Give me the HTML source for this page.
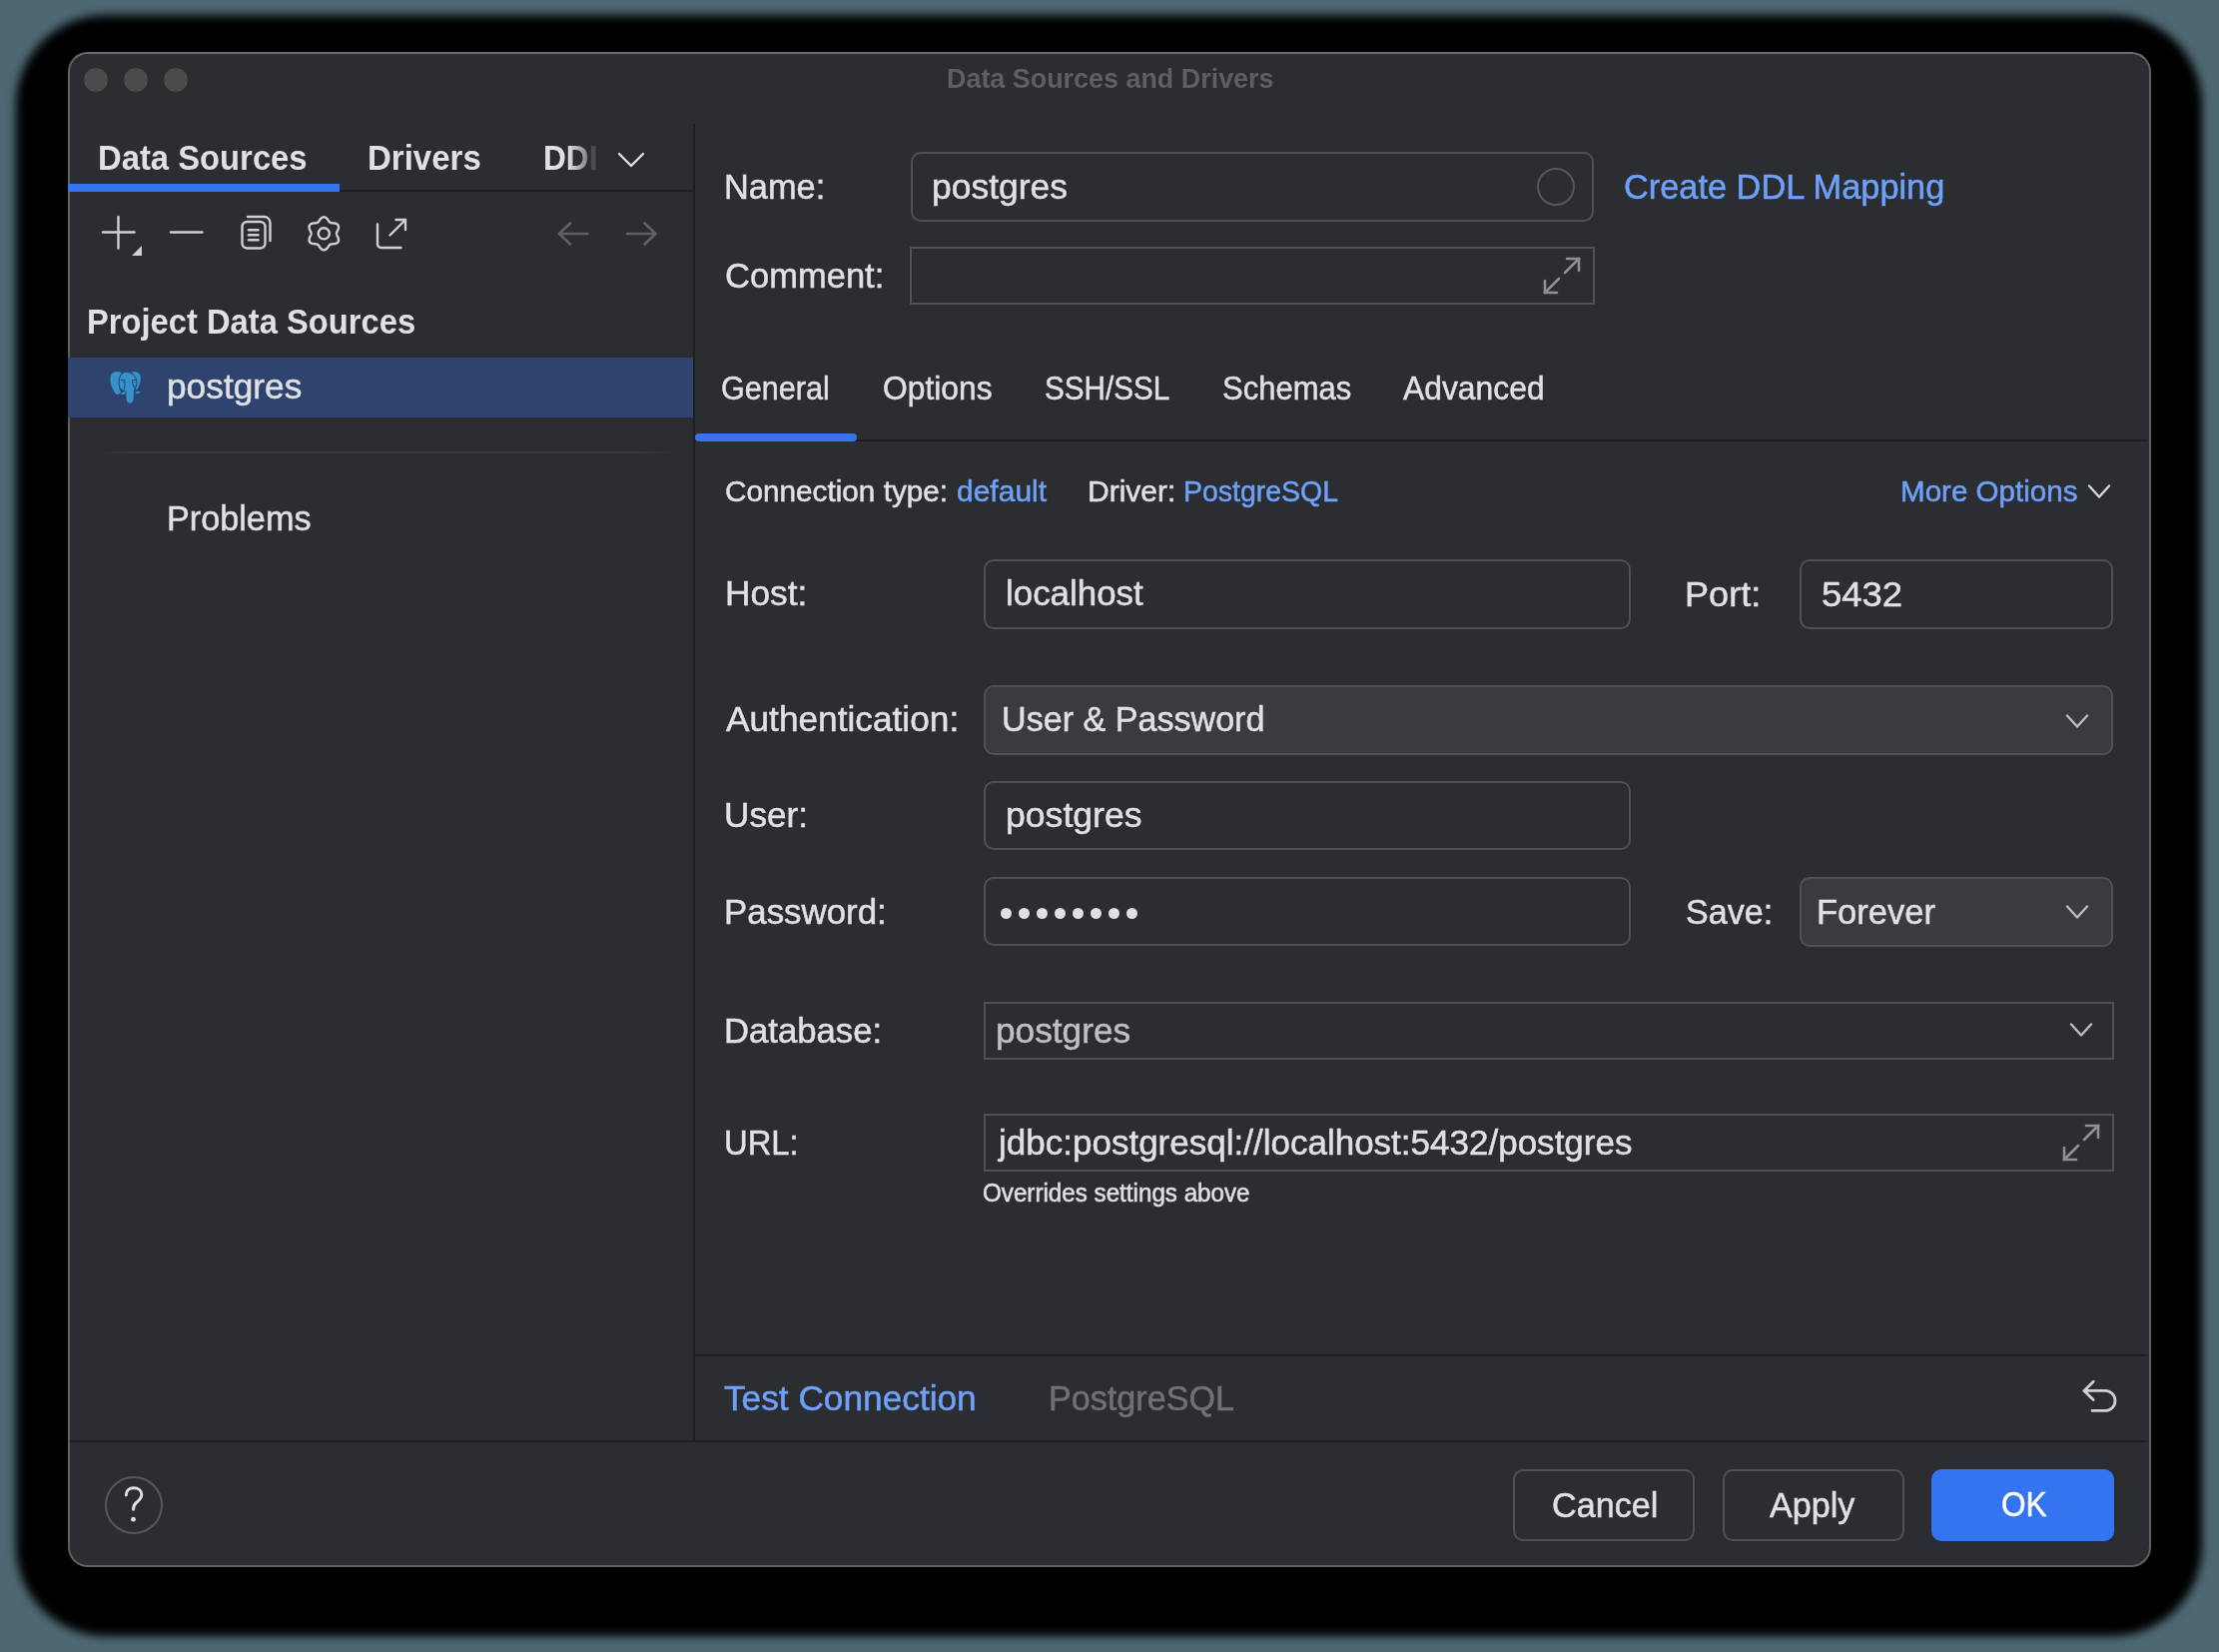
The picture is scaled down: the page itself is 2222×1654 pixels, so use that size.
<!DOCTYPE html>
<html><head><meta charset="utf-8"><style>
html,body{margin:0;padding:0;}
body{width:2222px;height:1654px;background:#4e6873;position:relative;overflow:hidden;font-family:"Liberation Sans",sans-serif;}
.a{position:absolute;}
.t{position:absolute;white-space:nowrap;transform-origin:0 0;}
#tddl{-webkit-mask-image:linear-gradient(90deg,#000 45%,rgba(0,0,0,.55) 78%,rgba(0,0,0,.18) 86%,rgba(0,0,0,.18) 100%)}
svg{position:absolute;left:0;top:0;}
</style></head><body>
<div class="a" style="left:16px;top:15px;width:2189px;height:1623px;background:#000;border-radius:90px;filter:blur(5px)"></div>
<div class="a" style="left:68px;top:52px;width:2086px;height:1517px;background:#2b2d30;border-radius:20px;box-sizing:border-box;border:2px solid #5f6064;border-top-color:#6a6b6e"></div>
<div class="a" style="left:84px;top:68px;width:24px;height:24px;background:#4a4b4d;border-radius:50%"></div>
<div class="a" style="left:124px;top:68px;width:24px;height:24px;background:#4a4b4d;border-radius:50%"></div>
<div class="a" style="left:164px;top:68px;width:24px;height:24px;background:#4a4b4d;border-radius:50%"></div>
<div class="a" style="left:70px;top:190px;width:625px;height:2px;background:#1e1f22"></div>
<div class="a" style="left:68px;top:184px;width:272px;height:8px;background:#3574f0"></div>
<div class="a" style="left:694px;top:124px;width:2px;height:1319px;background:#1e1f22"></div>
<div class="a" style="left:68px;top:358px;width:626px;height:60px;background:#2e436e"></div>
<div class="a" style="left:94px;top:452px;width:584px;height:2px;background:linear-gradient(90deg,rgba(57,59,64,0),#393b40 8%,#393b40 92%,rgba(57,59,64,0))"></div>
<div class="a" style="left:70px;top:1442px;width:2081px;height:2px;background:#1e1f22"></div>
<div class="a" style="left:696px;top:1356px;width:1455px;height:2px;background:#1e1f22"></div>
<div class="a" style="left:696px;top:440px;width:1455px;height:2px;background:#1e1f22"></div>
<div class="a" style="left:696px;top:434px;width:162px;height:8px;background:#3574f0;border-radius:4px"></div>
<div class="a" style="left:912px;top:152px;width:684px;height:70px;background:#2b2d30;border:2px solid #4e5157;border-radius:10px;box-sizing:border-box"></div>
<div class="a" style="left:911px;top:247px;width:686px;height:58px;background:#2b2d30;border:2px solid #4e5157;border-radius:0px;box-sizing:border-box"></div>
<div class="a" style="left:985px;top:560px;width:648px;height:70px;background:#2b2d30;border:2px solid #4e5157;border-radius:10px;box-sizing:border-box"></div>
<div class="a" style="left:1802px;top:560px;width:314px;height:70px;background:#2b2d30;border:2px solid #4e5157;border-radius:10px;box-sizing:border-box"></div>
<div class="a" style="left:985px;top:686px;width:1131px;height:70px;background:#393b40;border:2px solid #4e5157;border-radius:10px;box-sizing:border-box"></div>
<div class="a" style="left:985px;top:782px;width:648px;height:69px;background:#2b2d30;border:2px solid #4e5157;border-radius:10px;box-sizing:border-box"></div>
<div class="a" style="left:985px;top:878px;width:648px;height:69px;background:#2b2d30;border:2px solid #4e5157;border-radius:10px;box-sizing:border-box"></div>
<div class="a" style="left:1802px;top:878px;width:314px;height:70px;background:#393b40;border:2px solid #4e5157;border-radius:10px;box-sizing:border-box"></div>
<div class="a" style="left:985px;top:1003px;width:1132px;height:58px;background:#2b2d30;border:2px solid #4e5157;border-radius:0px;box-sizing:border-box"></div>
<div class="a" style="left:985px;top:1115px;width:1132px;height:58px;background:#2b2d30;border:2px solid #4e5157;border-radius:0px;box-sizing:border-box"></div>
<div class="a" style="left:1515px;top:1471px;width:182px;height:72px;background:#2b2d30;border:2px solid #4e5157;border-radius:10px;box-sizing:border-box"></div>
<div class="a" style="left:1725px;top:1471px;width:182px;height:72px;background:#2b2d30;border:2px solid #4e5157;border-radius:10px;box-sizing:border-box"></div>
<div class="a" style="left:1934px;top:1471px;width:183px;height:72px;background:#3574f0;border-radius:10px"></div>
<div class="a" style="left:105px;top:1478px;width:58px;height:58px;border:2px solid #55575c;border-radius:50%;box-sizing:border-box"></div>
<div class="a" style="left:1539px;top:168px;width:38px;height:38px;border:2px solid #55575c;border-radius:50%;box-sizing:border-box"></div>
<div id="title" class="t" style="left:947.84px;top:65.90px;font-size:27px;line-height:27px;font-weight:700;color:#5e5f63;transform:scaleX(0.9965)">Data Sources and Drivers</div>
<div id="tds" class="t" style="left:98.16px;top:139.80px;font-size:35px;line-height:35px;font-weight:700;color:#dfe1e5;transform:scaleX(0.9369)">Data Sources</div>
<div id="tdr" class="t" style="left:368.40px;top:139.80px;font-size:35px;line-height:35px;font-weight:700;color:#dfe1e5;transform:scaleX(0.9428)">Drivers</div>
<div id="tddl" class="t" style="left:544.20px;top:139.80px;font-size:35px;line-height:35px;font-weight:700;color:#dfe1e5;transform:scaleX(0.9038)">DDI</div>
<div id="pds" class="t" style="left:86.72px;top:304.20px;font-size:35px;line-height:35px;font-weight:700;color:#dfe1e5;transform:scaleX(0.9347)">Project Data Sources</div>
<div id="rowpg" class="t" style="left:167.40px;top:369.00px;font-size:35px;line-height:35px;font-weight:400;color:#dfe1e5;transform:scaleX(1.0079);-webkit-text-stroke:0.5px #dfe1e5">postgres</div>
<div id="prob" class="t" style="left:166.94px;top:500.50px;font-size:35px;line-height:35px;font-weight:400;color:#dfe1e5;transform:scaleX(0.9774);-webkit-text-stroke:0.5px #dfe1e5">Problems</div>
<div id="name" class="t" style="left:725.40px;top:168.50px;font-size:35px;line-height:35px;font-weight:400;color:#dfe1e5;transform:scaleX(0.9823);-webkit-text-stroke:0.5px #dfe1e5">Name:</div>
<div id="namev" class="t" style="left:933.40px;top:168.50px;font-size:35px;line-height:35px;font-weight:400;color:#dfe1e5;transform:scaleX(1.0138);-webkit-text-stroke:0.5px #dfe1e5">postgres</div>
<div id="comm" class="t" style="left:726.20px;top:258.00px;font-size:35px;line-height:35px;font-weight:400;color:#dfe1e5;transform:scaleX(0.9868);-webkit-text-stroke:0.5px #dfe1e5">Comment:</div>
<div id="ddl" class="t" style="left:1625.64px;top:168.50px;font-size:35px;line-height:35px;font-weight:400;color:#6ea1fa;transform:scaleX(0.9812);-webkit-text-stroke:0.5px #6ea1fa">Create DDL Mapping</div>
<div id="tgen" class="t" style="left:722.08px;top:372.00px;font-size:33px;line-height:33px;font-weight:400;color:#dfe1e5;transform:scaleX(0.9269);-webkit-text-stroke:0.5px #dfe1e5">General</div>
<div id="topt" class="t" style="left:883.98px;top:372.00px;font-size:33px;line-height:33px;font-weight:400;color:#dfe1e5;transform:scaleX(0.9635);-webkit-text-stroke:0.5px #dfe1e5">Options</div>
<div id="tssh" class="t" style="left:1045.52px;top:372.00px;font-size:33px;line-height:33px;font-weight:400;color:#dfe1e5;transform:scaleX(0.8993);-webkit-text-stroke:0.5px #dfe1e5">SSH/SSL</div>
<div id="tsch" class="t" style="left:1223.66px;top:372.00px;font-size:33px;line-height:33px;font-weight:400;color:#dfe1e5;transform:scaleX(0.9396);-webkit-text-stroke:0.5px #dfe1e5">Schemas</div>
<div id="tadv" class="t" style="left:1405.12px;top:372.00px;font-size:33px;line-height:33px;font-weight:400;color:#dfe1e5;transform:scaleX(0.9648);-webkit-text-stroke:0.5px #dfe1e5">Advanced</div>
<div id="ctype" class="t" style="left:726.20px;top:478.00px;font-size:29px;line-height:29px;font-weight:400;color:#dfe1e5;transform:scaleX(1.0251);-webkit-text-stroke:0.5px #dfe1e5">Connection type:</div>
<div id="cdef" class="t" style="left:957.52px;top:478.00px;font-size:29px;line-height:29px;font-weight:400;color:#6ea1fa;transform:scaleX(1.0346);-webkit-text-stroke:0.5px #6ea1fa">default</div>
<div id="drv" class="t" style="left:1088.84px;top:478.00px;font-size:29px;line-height:29px;font-weight:400;color:#dfe1e5;transform:scaleX(1.0352);-webkit-text-stroke:0.5px #dfe1e5">Driver:</div>
<div id="drvv" class="t" style="left:1184.84px;top:478.00px;font-size:29px;line-height:29px;font-weight:400;color:#6ea1fa;transform:scaleX(0.9813);-webkit-text-stroke:0.5px #6ea1fa">PostgreSQL</div>
<div id="more" class="t" style="left:1902.84px;top:478.20px;font-size:29px;line-height:29px;font-weight:400;color:#6ea1fa;transform:scaleX(1.0198);-webkit-text-stroke:0.5px #6ea1fa">More Options</div>
<div id="host" class="t" style="left:726.06px;top:576.00px;font-size:35px;line-height:35px;font-weight:400;color:#dfe1e5;transform:scaleX(1.0069);-webkit-text-stroke:0.5px #dfe1e5">Host:</div>
<div id="hostv" class="t" style="left:1007.40px;top:576.00px;font-size:35px;line-height:35px;font-weight:400;color:#dfe1e5;transform:scaleX(0.9972);-webkit-text-stroke:0.5px #dfe1e5">localhost</div>
<div id="port" class="t" style="left:1686.72px;top:576.50px;font-size:35px;line-height:35px;font-weight:400;color:#dfe1e5;transform:scaleX(1.0316);-webkit-text-stroke:0.5px #dfe1e5">Port:</div>
<div id="portv" class="t" style="left:1824.20px;top:576.50px;font-size:35px;line-height:35px;font-weight:400;color:#dfe1e5;transform:scaleX(1.0422);-webkit-text-stroke:0.5px #dfe1e5">5432</div>
<div id="auth" class="t" style="left:727.12px;top:702.20px;font-size:35px;line-height:35px;font-weight:400;color:#dfe1e5;transform:scaleX(1.0071);-webkit-text-stroke:0.5px #dfe1e5">Authentication:</div>
<div id="authv" class="t" style="left:1003.40px;top:702.20px;font-size:35px;line-height:35px;font-weight:400;color:#dfe1e5;transform:scaleX(0.9743);-webkit-text-stroke:0.5px #dfe1e5">User &amp; Password</div>
<div id="user" class="t" style="left:724.72px;top:798.20px;font-size:35px;line-height:35px;font-weight:400;color:#dfe1e5;transform:scaleX(1.0040);-webkit-text-stroke:0.5px #dfe1e5">User:</div>
<div id="userv" class="t" style="left:1007.40px;top:798.20px;font-size:35px;line-height:35px;font-weight:400;color:#dfe1e5;transform:scaleX(1.0168);-webkit-text-stroke:0.5px #dfe1e5">postgres</div>
<div id="pass" class="t" style="left:724.72px;top:894.80px;font-size:35px;line-height:35px;font-weight:400;color:#dfe1e5;transform:scaleX(0.9959);-webkit-text-stroke:0.5px #dfe1e5">Password:</div>
<div id="save" class="t" style="left:1687.98px;top:895.00px;font-size:35px;line-height:35px;font-weight:400;color:#dfe1e5;transform:scaleX(0.9736);-webkit-text-stroke:0.5px #dfe1e5">Save:</div>
<div id="savev" class="t" style="left:1818.84px;top:895.00px;font-size:35px;line-height:35px;font-weight:400;color:#dfe1e5;transform:scaleX(0.9871);-webkit-text-stroke:0.5px #dfe1e5">Forever</div>
<div id="db" class="t" style="left:724.72px;top:1013.80px;font-size:35px;line-height:35px;font-weight:400;color:#dfe1e5;transform:scaleX(0.9912);-webkit-text-stroke:0.5px #dfe1e5">Database:</div>
<div id="dbv" class="t" style="left:996.72px;top:1013.80px;font-size:35px;line-height:35px;font-weight:400;color:#bec0c5;transform:scaleX(1.0065);-webkit-text-stroke:0.5px #bec0c5">postgres</div>
<div id="url" class="t" style="left:724.72px;top:1126.00px;font-size:35px;line-height:35px;font-weight:400;color:#dfe1e5;transform:scaleX(0.9361);-webkit-text-stroke:0.5px #dfe1e5">URL:</div>
<div id="urlv" class="t" style="left:1000.12px;top:1126.00px;font-size:35px;line-height:35px;font-weight:400;color:#dfe1e5;transform:scaleX(1.0003);-webkit-text-stroke:0.5px #dfe1e5">jdbc:postgresql://localhost:5432/postgres</div>
<div id="ovr" class="t" style="left:984.20px;top:1181.60px;font-size:25px;line-height:25px;font-weight:400;color:#dfe1e5;transform:scaleX(0.9676);-webkit-text-stroke:0.5px #dfe1e5">Overrides settings above</div>
<div id="test" class="t" style="left:725.18px;top:1382.30px;font-size:35px;line-height:35px;font-weight:400;color:#6ea1fa;transform:scaleX(1.0069);-webkit-text-stroke:0.5px #6ea1fa">Test Connection</div>
<div id="pgs" class="t" style="left:1050.28px;top:1382.30px;font-size:35px;line-height:35px;font-weight:400;color:#6f7175;transform:scaleX(0.9754);-webkit-text-stroke:0.5px #6f7175">PostgreSQL</div>
<div id="cancel" class="t" style="left:1553.86px;top:1488.50px;font-size:35px;line-height:35px;font-weight:400;color:#dfe1e5;transform:scaleX(0.9769);-webkit-text-stroke:0.5px #dfe1e5">Cancel</div>
<div id="apply" class="t" style="left:1772.44px;top:1488.50px;font-size:35px;line-height:35px;font-weight:400;color:#dfe1e5;transform:scaleX(0.9750);-webkit-text-stroke:0.5px #dfe1e5">Apply</div>
<div id="ok" class="t" style="left:2004.20px;top:1488.00px;font-size:35px;line-height:35px;font-weight:400;color:#ffffff;transform:scaleX(0.9031);-webkit-text-stroke:0.5px #ffffff">OK</div>
<div class="a" style="left:1001.50px;top:909px;width:11px;height:11px;border-radius:50%;background:#dfe1e5"></div>
<div class="a" style="left:1019.50px;top:909px;width:11px;height:11px;border-radius:50%;background:#dfe1e5"></div>
<div class="a" style="left:1037.50px;top:909px;width:11px;height:11px;border-radius:50%;background:#dfe1e5"></div>
<div class="a" style="left:1055.50px;top:909px;width:11px;height:11px;border-radius:50%;background:#dfe1e5"></div>
<div class="a" style="left:1073.50px;top:909px;width:11px;height:11px;border-radius:50%;background:#dfe1e5"></div>
<div class="a" style="left:1091.50px;top:909px;width:11px;height:11px;border-radius:50%;background:#dfe1e5"></div>
<div class="a" style="left:1109.50px;top:909px;width:11px;height:11px;border-radius:50%;background:#dfe1e5"></div>
<div class="a" style="left:1127.50px;top:909px;width:11px;height:11px;border-radius:50%;background:#dfe1e5"></div>
<svg width="2222" height="1654" viewBox="0 0 2222 1654"><polyline points="620.0,154.0 632,166.0 644.0,154.0" fill="none" stroke="#dfe1e5" stroke-width="2.4" stroke-linecap="round" stroke-linejoin="round"/><polyline points="2092.0,486.5 2102,497.5 2112.0,486.5" fill="none" stroke="#d5d7dc" stroke-width="2.4" stroke-linecap="round" stroke-linejoin="round"/><polyline points="2070.0,716.5 2080,727.5 2090.0,716.5" fill="none" stroke="#bcbec3" stroke-width="2.4" stroke-linecap="round" stroke-linejoin="round"/><polyline points="2070.0,907.5 2080,918.5 2090.0,907.5" fill="none" stroke="#bcbec3" stroke-width="2.4" stroke-linecap="round" stroke-linejoin="round"/><polyline points="2074.0,1025.5 2084,1036.5 2094.0,1025.5" fill="none" stroke="#bcbec3" stroke-width="2.4" stroke-linecap="round" stroke-linejoin="round"/><g fill="none" stroke="#8e9196" stroke-width="2.6" stroke-linecap="round"><polyline points="1569,259 1581,259 1581,271"/><line x1="1581" y1="259" x2="1567" y2="273"/><polyline points="1547,281 1547,293 1559,293"/><line x1="1547" y1="293" x2="1561" y2="279"/></g><g fill="none" stroke="#8e9196" stroke-width="2.6" stroke-linecap="round"><polyline points="2089,1127 2101,1127 2101,1139"/><line x1="2101" y1="1127" x2="2087" y2="1141"/><polyline points="2067,1149 2067,1161 2079,1161"/><line x1="2067" y1="1161" x2="2081" y2="1147"/></g><g fill="none" stroke="#ced0d6" stroke-width="2.4" stroke-linecap="round" stroke-linejoin="round"><line x1="103" y1="232.5" x2="134.5" y2="232.5"/><line x1="118.5" y1="217" x2="118.5" y2="248.5"/><line x1="171" y1="232.5" x2="202.5" y2="232.5"/><rect x="242.5" y="222" width="23" height="26.5" rx="5"/><path d="M248 217 h16.5 a6 6 0 0 1 6 6 v18"/><line x1="249" y1="230.3" x2="258.5" y2="230.3"/><line x1="249" y1="235.2" x2="258.5" y2="235.2"/><line x1="249" y1="240.2" x2="258.5" y2="240.2"/><path d="M378 224.5 v20 a3.5 3.5 0 0 0 3.5 3.5 h20"/><polyline points="396.5,220 406,220 406,230"/><line x1="406" y1="220" x2="390.5" y2="235.5"/></g><polygon points="142,246 142,256 132,256" fill="#ced0d6"/><polygon points="324.30,217.30 324.73,217.33 325.16,217.42 325.58,217.56 325.99,217.75 326.38,217.99 326.76,218.28 327.12,218.60 327.46,218.94 327.78,219.31 328.08,219.70 328.36,220.09 328.63,220.47 328.89,220.85 329.13,221.21 329.37,221.55 329.61,221.87 329.86,222.15 330.11,222.40 330.37,222.62 330.65,222.80 330.95,222.95 331.27,223.07 331.61,223.16 331.98,223.23 332.37,223.28 332.79,223.32 333.22,223.35 333.68,223.39 334.15,223.43 334.62,223.48 335.11,223.55 335.59,223.64 336.06,223.76 336.51,223.91 336.95,224.09 337.36,224.31 337.73,224.57 338.06,224.86 338.35,225.19 338.59,225.55 338.78,225.94 338.92,226.35 339.01,226.79 339.04,227.24 339.03,227.70 338.97,228.17 338.88,228.64 338.74,229.11 338.58,229.57 338.40,230.02 338.21,230.46 338.01,230.89 337.81,231.30 337.62,231.69 337.44,232.07 337.29,232.43 337.17,232.79 337.08,233.13 337.02,233.47 337.00,233.80 337.02,234.13 337.08,234.47 337.17,234.81 337.29,235.17 337.44,235.53 337.62,235.91 337.81,236.30 338.01,236.71 338.21,237.14 338.40,237.58 338.58,238.03 338.74,238.49 338.88,238.96 338.97,239.43 339.03,239.90 339.04,240.36 339.01,240.81 338.92,241.25 338.78,241.66 338.59,242.05 338.35,242.41 338.06,242.74 337.73,243.03 337.36,243.29 336.95,243.51 336.51,243.69 336.06,243.84 335.59,243.96 335.11,244.05 334.62,244.12 334.15,244.17 333.68,244.21 333.22,244.25 332.79,244.28 332.37,244.32 331.98,244.37 331.61,244.44 331.27,244.53 330.95,244.65 330.65,244.80 330.37,244.98 330.11,245.20 329.86,245.45 329.61,245.73 329.37,246.05 329.13,246.39 328.89,246.75 328.63,247.13 328.36,247.51 328.08,247.90 327.78,248.29 327.46,248.66 327.12,249.00 326.76,249.32 326.38,249.61 325.99,249.85 325.58,250.04 325.16,250.18 324.73,250.27 324.30,250.30 323.87,250.27 323.44,250.18 323.02,250.04 322.61,249.85 322.22,249.61 321.84,249.32 321.48,249.00 321.14,248.66 320.82,248.29 320.52,247.90 320.24,247.51 319.97,247.13 319.71,246.75 319.47,246.39 319.23,246.05 318.99,245.73 318.74,245.45 318.49,245.20 318.23,244.98 317.95,244.80 317.65,244.65 317.33,244.53 316.99,244.44 316.62,244.37 316.23,244.32 315.81,244.28 315.38,244.25 314.92,244.21 314.45,244.17 313.98,244.12 313.49,244.05 313.01,243.96 312.54,243.84 312.09,243.69 311.65,243.51 311.24,243.29 310.87,243.03 310.54,242.74 310.25,242.41 310.01,242.05 309.82,241.66 309.68,241.25 309.59,240.81 309.56,240.36 309.57,239.90 309.63,239.43 309.72,238.96 309.86,238.49 310.02,238.03 310.20,237.58 310.39,237.14 310.59,236.71 310.79,236.30 310.98,235.91 311.16,235.53 311.31,235.17 311.43,234.81 311.52,234.47 311.58,234.13 311.60,233.80 311.58,233.47 311.52,233.13 311.43,232.79 311.31,232.43 311.16,232.07 310.98,231.69 310.79,231.30 310.59,230.89 310.39,230.46 310.20,230.02 310.02,229.57 309.86,229.11 309.72,228.64 309.63,228.17 309.57,227.70 309.56,227.24 309.59,226.79 309.68,226.35 309.82,225.94 310.01,225.55 310.25,225.19 310.54,224.86 310.87,224.57 311.24,224.31 311.65,224.09 312.09,223.91 312.54,223.76 313.01,223.64 313.49,223.55 313.98,223.48 314.45,223.43 314.92,223.39 315.38,223.35 315.81,223.32 316.23,223.28 316.62,223.23 316.99,223.16 317.33,223.07 317.65,222.95 317.95,222.80 318.23,222.62 318.49,222.40 318.74,222.15 318.99,221.87 319.23,221.55 319.47,221.21 319.71,220.85 319.97,220.47 320.24,220.09 320.52,219.70 320.82,219.31 321.14,218.94 321.48,218.60 321.84,218.28 322.22,217.99 322.61,217.75 323.02,217.56 323.44,217.42 323.87,217.33 324.30,217.30" fill="none" stroke="#ced0d6" stroke-width="2.4" stroke-linejoin="round"/><circle cx="324.3" cy="233.8" r="5.6" fill="none" stroke="#ced0d6" stroke-width="2.4"/><g fill="none" stroke="#606165" stroke-width="2.6" stroke-linecap="round" stroke-linejoin="round"><line x1="560" y1="234" x2="588.5" y2="234"/><polyline points="571,223.5 560,234 571,244.5"/><line x1="628" y1="234" x2="656.5" y2="234"/><polyline points="645.5,223.5 656.5,234 645.5,244.5"/></g><g fill="none" stroke="#ced0d6" stroke-width="2.8" stroke-linecap="round" stroke-linejoin="round"><path d="M2087 1392.4 h21 a10 10 0 0 1 0 20 h-13"/><polyline points="2096.2,1383.2 2087,1392.4 2096.2,1401.6"/></g><path d="M126.3 1497 C126.3 1492.3 129.5 1489.8 133.8 1489.8 C138.5 1489.8 141.8 1492.5 141.8 1496.5 C141.8 1500 139.5 1502 137 1504 C134.5 1506 133.5 1508 133.5 1511.4" fill="none" stroke="#dfe1e5" stroke-width="2.9" stroke-linecap="round"/><circle cx="133.5" cy="1521.2" r="2.4" fill="#dfe1e5"/><g transform="translate(100,362) scale(0.03027)"><path fill="#3692cb" d="M560 335 C420 335 340 420 345 600 C350 800 470 1000 550 1090 C600 1090 650 1060 700 1020 L640 880 C620 700 640 500 720 370 C680 345 620 335 560 335 Z"/><path fill="#3692cb" d="M1040 345 C1100 330 1200 330 1280 380 C1350 430 1370 560 1330 700 C1300 800 1260 880 1220 930 L1180 880 C1230 700 1200 480 1040 345 Z"/><path fill="#3692cb" stroke="#2e436e" stroke-width="34" d="M870 345 C1000 340 1150 420 1210 600 C1230 700 1200 850 1140 950 L1130 1250 C1120 1350 1060 1390 990 1390 C920 1390 870 1340 865 1250 L850 1000 C760 960 690 940 650 860 C620 700 630 500 720 400 C770 360 820 345 870 345 Z"/><path fill="none" stroke="#2e436e" stroke-width="34" d="M690 610 H820 C840 700 830 820 800 940 M1080 610 H1190 M1080 610 C1060 700 1100 800 1170 890"/><circle cx="770" cy="680" r="22" fill="#2e436e"/><circle cx="1140" cy="680" r="22" fill="#2e436e"/><path fill="#3692cb" d="M680 1075 C720 1020 780 995 835 990 L840 1085 C780 1095 720 1090 680 1075 Z"/><path fill="#3692cb" d="M1175 990 L1345 995 C1340 1045 1280 1065 1195 1060 Z"/></g></svg>
</body></html>
